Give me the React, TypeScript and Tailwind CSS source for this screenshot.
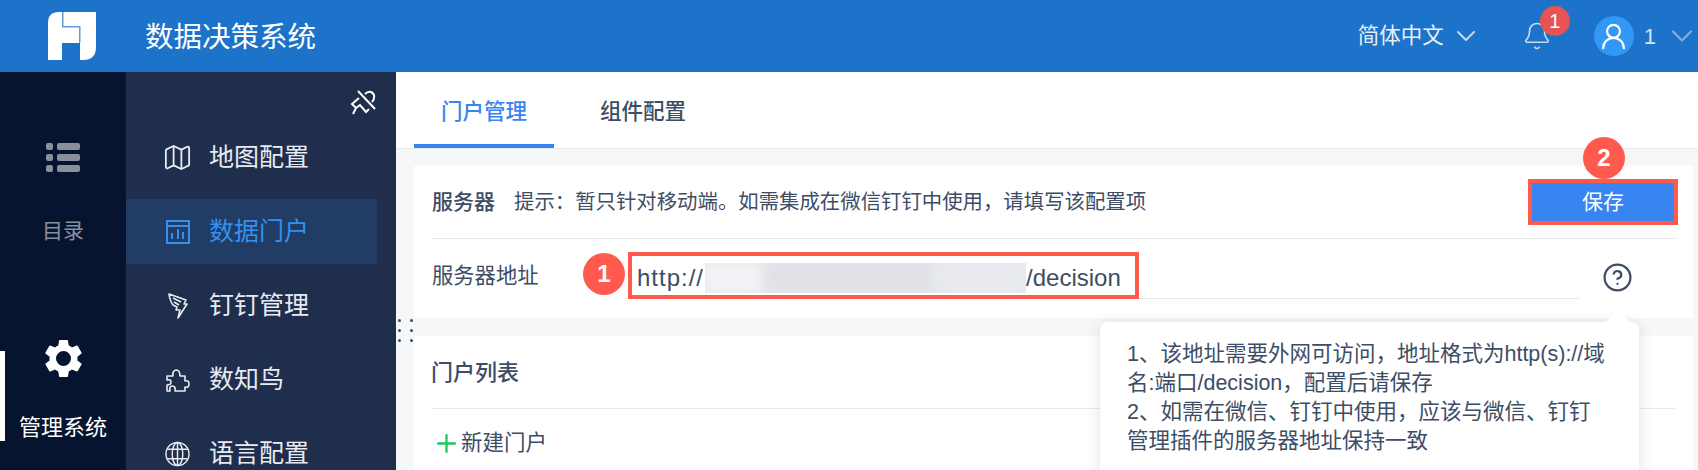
import React from "react";
import { ChevronDown, Bell, UserRound, Map, CircleHelp, Plus } from "lucide-react";

const Logo = () => (
  <svg width="48" height="48" viewBox="0 0 48 48">
    <path d="M11 0H48V35Q48 48 35 48H0V11Q0 0 11 0Z" fill="#fff" />
    <path d="M14 31H32V48H14Z" fill="#1d72c9" />
    <path d="M14 0H15.5V14H32.5V31H31V15.5H14Z" fill="#5f9ddb" />
  </svg>
);

const ListIcon = () => (
  <svg width="34" height="30" viewBox="0 0 34 30" fill="#8a8f9c">
    <rect x="0" y="0" width="7" height="7" rx="2" />
    <rect x="11" y="0" width="23" height="7" rx="2" />
    <rect x="0" y="11" width="7" height="7" rx="2" />
    <rect x="11" y="11" width="23" height="7" rx="2" />
    <rect x="0" y="22" width="7" height="7" rx="2" />
    <rect x="11" y="22" width="23" height="7" rx="2" />
  </svg>
);

const GearIcon = () => (
  <svg width="45" height="45" viewBox="0 0 24 24" fill="#fff">
    <path fillRule="evenodd" d="M19.4 13a7.6 7.6 0 0 0 0-2l2.1-1.6a.5.5 0 0 0 .1-.6l-2-3.5a.5.5 0 0 0-.6-.2l-2.5 1a7.4 7.4 0 0 0-1.7-1l-.4-2.6a.5.5 0 0 0-.5-.4h-3.8a.5.5 0 0 0-.5.4l-.4 2.6a7.4 7.4 0 0 0-1.7 1l-2.5-1a.5.5 0 0 0-.6.2l-2 3.5a.5.5 0 0 0 .1.6L4.6 11a7.6 7.6 0 0 0 0 2l-2.1 1.6a.5.5 0 0 0-.1.6l2 3.5a.5.5 0 0 0 .6.2l2.5-1a7.4 7.4 0 0 0 1.7 1l.4 2.6a.5.5 0 0 0 .5.4h3.8a.5.5 0 0 0 .5-.4l.4-2.6a7.4 7.4 0 0 0 1.7-1l2.5 1a.5.5 0 0 0 .6-.2l2-3.5a.5.5 0 0 0-.1-.6ZM12 16a4 4 0 1 1 0-8 4 4 0 0 1 0 8Z" />
  </svg>
);

const PinIcon = () => (
  <svg width="28" height="28" viewBox="0 0 28 28" fill="none" stroke="#fff" strokeWidth="2">
    <path d="M9 2L26 20" />
    <path d="M10 9L3 15L7 19L11 16L17 23L20 20" />
    <path d="M16 5Q19 2 22 3Q26 5 25 9Q25 11 23 13" />
    <path d="M7 19L4 25" />
  </svg>
);

const ChartIcon = () => (
  <svg width="24" height="24" viewBox="0 0 24 24" fill="none" stroke="#3490f0" strokeWidth="2">
    <rect x="1" y="1" width="22" height="22" />
    <path d="M1 6H23" />
    <path d="M6 19V13M12 19V9M17 19V12" />
  </svg>
);

const DingIcon = () => (
  <svg width="20" height="26" viewBox="0 0 20 26" fill="none" stroke="#e8ebf0" strokeWidth="1.6" strokeLinejoin="round">
    <path d="M1 1L18 7L16 11L19 11L10 25L12 17L8 17L9 14L5 12Q2 8 1 1Z" />
    <path d="M5 5L13 9M6 9L11 12" />
  </svg>
);

const PuzzleIcon = () => (
  <svg width="24" height="24" viewBox="0 0 24 24" fill="none" stroke="#e8ebf0" strokeWidth="1.6" strokeLinejoin="round">
    <path d="M1 8H7Q6 3 10 2Q14 2 14 8H19V13Q23 12 23 16Q23 20 19 19V23H9Q10 18 6 18Q3 18 4 23H1V17Q5 17 5 14Q5 11 1 12Z" />
  </svg>
);

const GlobeIcon = () => (
  <svg width="26" height="26" viewBox="0 0 26 26" fill="none" stroke="#e8ebf0" strokeWidth="1.5">
    <circle cx="13" cy="13" r="12" />
    <ellipse cx="13" cy="13" rx="5.5" ry="12" />
    <path d="M2.5 8H23.5M2.5 18H23.5M13 1V25" />
  </svg>
);

const navItems = [
  { label: "地图配置", icon: <Map size={31} strokeWidth={1.4} color="#e8ebf0" className="shrink-0" /> },
  { label: "数据门户", icon: <ChartIcon />, active: true },
  { label: "钉钉管理", icon: <DingIcon /> },
  { label: "数知鸟", icon: <PuzzleIcon /> },
  { label: "语言配置", icon: <GlobeIcon /> },
];

const NumberDot = ({ n }: { n: number }) => (
  <div className="w-[42px] h-[42px] rounded-full bg-[#ff5a4d] text-white text-[24px] font-bold flex items-center justify-center">
    {n}
  </div>
);

export default function App() {
  return (
    <div className="relative w-[1698px] h-[470px] overflow-hidden flex flex-col bg-white font-['Liberation_Sans','Noto_Sans_CJK_SC',sans-serif]">
      {/* top bar */}
      <header className="h-[72px] shrink-0 bg-[#1d72c9] flex items-center text-white pl-[48px]">
        <Logo />
        <div className="ml-[49px] text-[28.5px] pt-[2px]">数据决策系统</div>
        <div className="ml-auto flex items-center text-[21.5px] text-[#e6eef8]">
          简体中文
          <ChevronDown size={32} strokeWidth={1.5} color="#c5d9f0" className="ml-[6px]" />
        </div>
        <div className="relative ml-[40px] w-[30px]">
          <Bell size={30} strokeWidth={1.3} color="#c5d9f0" />
          <div className="absolute -top-[15px] left-[18px] w-[30px] h-[30px] rounded-full bg-[#e55353] text-[20px] flex items-center justify-center">
            1
          </div>
        </div>
        <div className="ml-[42px] w-[40px] h-[40px] rounded-full bg-[#3298f5] flex items-center justify-center">
          <UserRound size={31} strokeWidth={1.7} color="#fff" />
        </div>
        <div className="ml-[10px] text-[22px] text-[#d5e4f5]">1</div>
        <ChevronDown size={36} strokeWidth={1.5} color="#7fade0" className="ml-[8px] -mr-[2px]" />
      </header>

      <div className="flex flex-1 min-h-0">
        {/* icon rail */}
        <aside className="relative w-[126px] shrink-0 bg-[#07142f] flex flex-col items-center">
          <div className="mt-[71px]">
            <ListIcon />
          </div>
          <div className="mt-[42px] text-[21px] text-[#8a8f9c]">目录</div>
          <div className="mt-[89px]">
            <GearIcon />
          </div>
          <div className="mt-[30px] text-[22px] text-white">管理系统</div>
          <div className="absolute left-0 top-[279px] w-[5px] h-[90px] bg-white" />
        </aside>

        {/* second level menu */}
        <nav className="relative w-[270px] shrink-0 bg-[#202e4d] pt-[53px]">
          <div className="absolute right-[19px] top-[17px]">
            <PinIcon />
          </div>
          {navItems.map((item) => (
            <div
              key={item.label}
              className={`w-[251px] h-[65px] mb-[9px] flex items-center pl-[39px] text-[25px] ${
                item.active ? "bg-[#213d66] text-[#3490f0]" : "text-[#e8ebf0]"
              }`}
            >
              <div className="w-[25px] flex justify-center shrink-0">{item.icon}</div>
              <span className="ml-[19px]">{item.label}</span>
            </div>
          ))}
        </nav>

        {/* content */}
        <main className="flex-1 min-w-0 bg-[#f6f7f9] text-[#3d4d66]">
          <div className="h-[77px] bg-white border-b border-[#e6e8ec] flex items-stretch pl-[18px]">
            <div className="w-[140px] border-b-4 border-[#3885f2] text-[#3885f2] text-[21.5px] font-medium flex items-center justify-center pt-[8px]">
              门户管理
            </div>
            <div className="ml-[46px] text-[21.5px] font-medium flex items-center pt-[4px]">组件配置</div>
          </div>

          <section className="mt-[17px] ml-[18px] mr-[5px] h-[152px] bg-white">
            <div className="ml-[18px] mr-[17px] h-[73px] border-b border-[#e6e8ec] flex items-center text-[20.4px]">
              <span className="font-medium text-[21px]">服务器</span>
              <span className="ml-[19px]">提示：暂只针对移动端。如需集成在微信钉钉中使用，请填写该配置项</span>
              <button className="relative ml-auto mr-[2px] w-[142px] h-[38px] bg-[#3885f2] text-white text-[21px] outline-4 outline-[#ff5a4d]">
                保存
                <div className="absolute -top-[46px] left-[51px]">
                  <NumberDot n={2} />
                </div>
              </button>
            </div>
            <div className="ml-[18px] flex items-center h-[79px]">
              <span className="w-[196px] shrink-0 text-[21.3px] -mt-[3px]">服务器地址</span>
              <div className="relative h-[55px] w-[951px] -mt-[14px] border-b border-[#e6e8ec] flex items-center pl-[9px] pt-[14px] text-[24px]">
                <span className="tracking-[1px]">http://</span>
                <div className="w-[321px] h-[30px] ml-[1px] bg-[#e6e8ec] overflow-hidden flex">
                  <div className="w-[60px] bg-[#f2f3f5] blur-[6px]" />
                  <div className="w-[170px] bg-[#dfe1e6] blur-[6px]" />
                  <div className="w-[91px] bg-[#e8eaee] blur-[6px]" />
                </div>
                /decision
                <div className="absolute left-0 top-[8px] w-[511px] h-[47px] border-4 border-[#ff5a4d]" />
                <div className="absolute -left-[45px] top-[9px]">
                  <NumberDot n={1} />
                </div>
              </div>
              <CircleHelp size={31} strokeWidth={1.7} color="#3d4d66" className="ml-[23px] -mt-[3px]" />
            </div>
          </section>

          <section className="mt-[18px] ml-[18px] mr-[5px] bg-white h-[140px]">
            <div className="ml-[17px] mr-[18px] h-[73px] border-b border-[#e6e8ec] flex items-center text-[22px] font-medium">
              门户列表
            </div>
            <div className="ml-[18px] mt-[18px] flex items-center text-[21.5px]">
              <Plus size={29} strokeWidth={1.9} color="#22c55e" />
              <span>新建门户</span>
            </div>
          </section>
        </main>
      </div>

      {/* drag handle between menu and content */}
      <div className="absolute left-[398px] top-[319px] grid grid-cols-2 gap-x-[9px] gap-y-[7px]">
        {[0, 1, 2, 3, 4, 5].map((i) => (
          <div key={i} className="w-[3px] h-[3px] rounded-full bg-[#3d4d66]" />
        ))}
      </div>

      {/* tooltip */}
      <div className="absolute left-[1100px] top-[322px] w-[539px] h-[160px] bg-white rounded-[8px] shadow-[0_2px_16px_rgba(0,0,0,0.12)] pl-[27px] pr-[30px] pt-[18px] text-[21.5px] leading-[29px] text-[#3d4d66]">
        <div className="absolute -top-[12px] left-[506px] w-0 h-0 border-l-[12px] border-r-[12px] border-b-[12px] border-l-transparent border-r-transparent border-b-white" />
        1、该地址需要外网可访问，地址格式为http(s)://域名:端口/decision，配置后请保存
        <br />
        2、如需在微信、钉钉中使用，应该与微信、钉钉管理插件的服务器地址保持一致
      </div>
    </div>
  );
}
